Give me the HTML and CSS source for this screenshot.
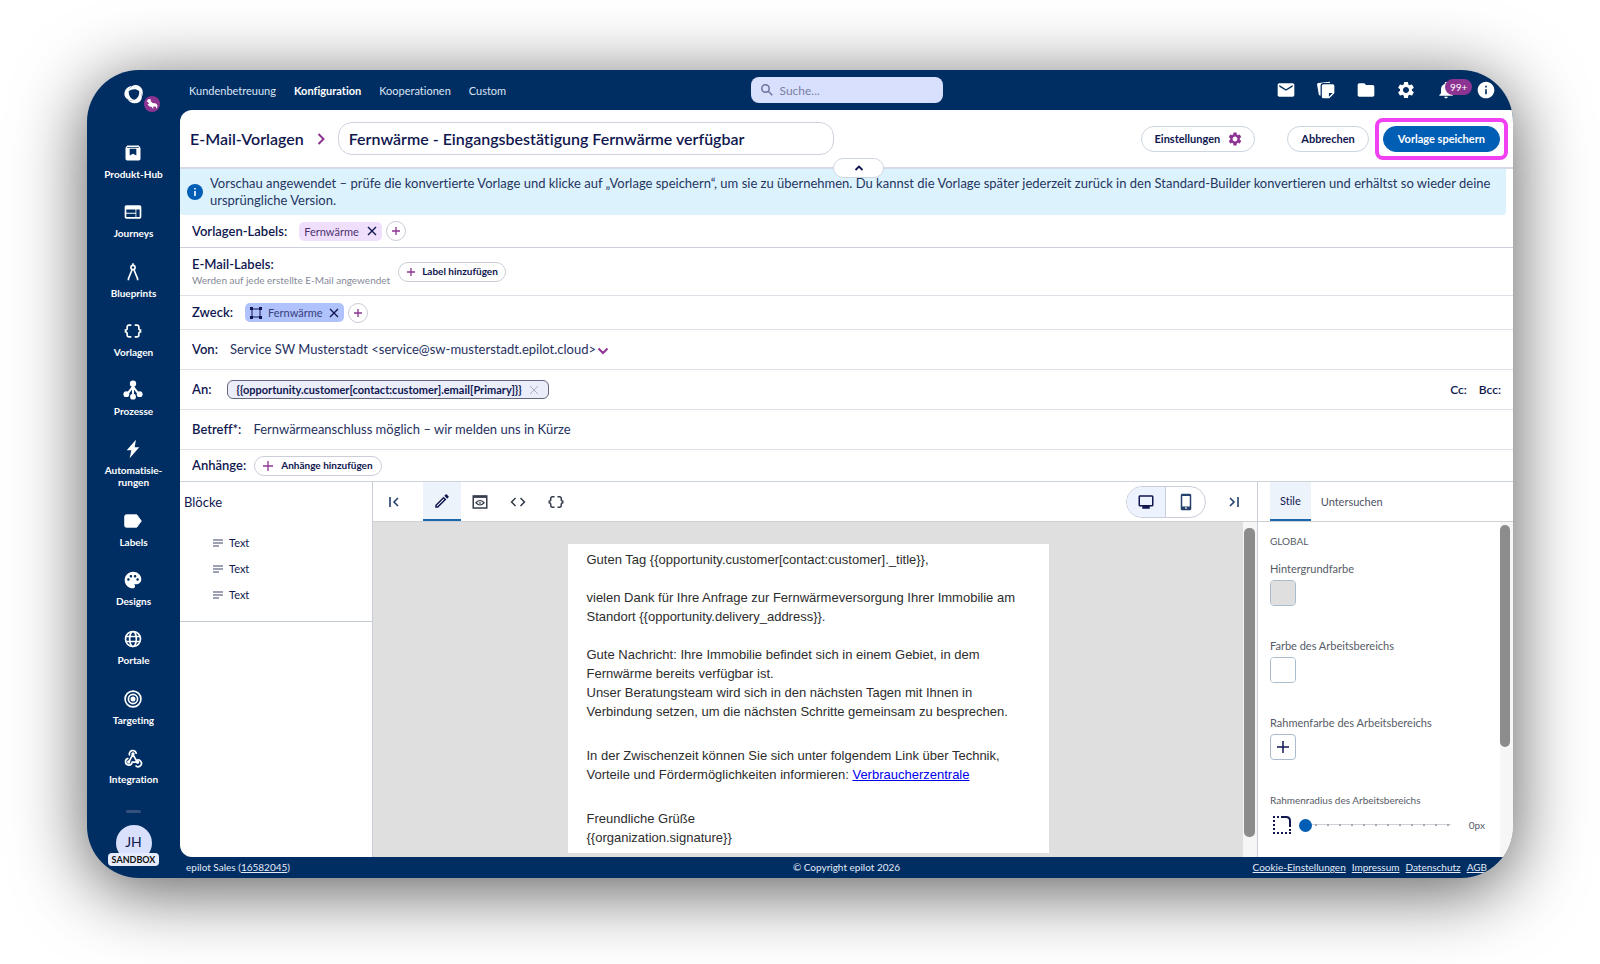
FILE: index.html
```
<!DOCTYPE html>
<html lang="de">
<head>
<meta charset="utf-8">
<meta name="viewport" content="width=device-width, initial-scale=1">
<title>E-Mail-Vorlagen</title>
<link rel="stylesheet" href="styles.css">
</head>
<body>

<div class="window">

	<aside class="sidebar">
		<a class="logo" href="#" aria-label="Startseite">
			<svg width="24" height="24" viewBox="0 0 22 22" fill="#fff">
				<path d="M6 8.500C7 2.500 15 0 18.300 6.500C19.300 8.800 19.200 11 18.500 13C17 7 11 4.500 6 8.500Z"/>
				<path d="M6 8.500C7 2.500 15 0 18.300 6.500C19.300 8.800 19.200 11 18.500 13C17 7 11 4.500 6 8.500Z" transform="rotate(120 11 11)"/>
				<path d="M6 8.500C7 2.500 15 0 18.300 6.500C19.300 8.800 19.200 11 18.500 13C17 7 11 4.500 6 8.500Z" transform="rotate(240 11 11)"/>
			</svg>
			<svg class="logo-badge" width="18" height="18" viewBox="0 0 18 18">
				<circle cx="9" cy="9" r="8" fill="#8d3493"/>
				<path d="M3.500 6.500L5.500 4l2.500.5-.5 1.500 2 2 3.500.5 1.500 2-.5 3-1-.5v-1.500l-3 .3.500 1.700H9.500L9 12l-2.500-.5L4.500 9.500l1.500-1-1-1.500z" fill="#fff"/>
			</svg>
		</a>
		<nav class="side-nav">
			<a href="#">
				<svg width="20" height="20" viewBox="0 0 24 24"><path fill="currentColor" d="M5 3h14l2 3v13a2 2 0 0 1-2 2H5a2 2 0 0 1-2-2V6zm3 4v8l4-2 4 2V7zM5 5v1h14V5z" fill-rule="evenodd"/></svg>
				Produkt-Hub
			</a>
			<a href="#">
				<svg width="20" height="20" viewBox="0 0 24 24"><path fill="currentColor" fill-rule="evenodd" d="M4 4h16a2 2 0 0 1 2 2v12a2 2 0 0 1-2 2H4a2 2 0 0 1-2-2V6c0-1.100.9-2 2-2zm0 5v4h11V9zm0 5v4h11v-4zm12-5v9h4V9z"/></svg>
				Journeys
			</a>
			<a href="#">
				<svg width="20" height="20" viewBox="0 0 24 24" fill="none" stroke="currentColor" stroke-width="2"><circle cx="12" cy="6.500" r="2.500"/><path d="M12 1.500V4M11 9L6.500 20v2M13 9l4.500 11v2"/></svg>
				Blueprints
			</a>
			<a href="#">
				<svg width="20" height="20" viewBox="0 0 24 24"><path fill="currentColor" d="M4 7v2c0 .55-.45 1-1 1H2v4h1c.55 0 1 .45 1 1v2c0 1.650 1.350 3 3 3h3v-2H7c-.55 0-1-.45-1-1v-2c0-1.300-.84-2.420-2-2.830v-.34C5.160 11.420 6 10.300 6 9V7c0-.55.45-1 1-1h3V4H7C5.350 4 4 5.350 4 7zm17 3c-.55 0-1-.45-1-1V7c0-1.650-1.350-3-3-3h-3v2h3c.55 0 1 .45 1 1v2c0 1.300.84 2.420 2 2.830v.34c-1.160.41-2 1.520-2 2.830v2c0 .55-.45 1-1 1h-3v2h3c1.650 0 3-1.350 3-3v-2c0-.55.45-1 1-1h1v-4h-1z"/></svg>
				Vorlagen
			</a>
			<a href="#">
				<svg width="20" height="20" viewBox="0 0 24 24" fill="currentColor"><path d="M12 4v16M12 8l-7 9M12 8l7 9" stroke="currentColor" stroke-width="2.500"/><circle cx="12" cy="4.500" r="3.800"/><circle cx="4" cy="17" r="3.500"/><circle cx="20" cy="17" r="3.500"/><circle cx="12" cy="20" r="3.500"/></svg>
				Prozesse
			</a>
			<a href="#">
				<svg width="20" height="20" viewBox="0 0 24 24"><path fill="currentColor" d="M15.500 1L4.500 13.500h5.500L8 23l11.500-13H14z"/></svg>
				Automatisie-<br>rungen
			</a>
			<a href="#">
				<svg width="20" height="20" viewBox="0 0 24 24"><path fill="currentColor" d="M16.500 4.500H4a2 2 0 0 0-2 2v11a2 2 0 0 0 2 2h12.500l5.500-7.500z" stroke="currentColor" stroke-linejoin="round"/></svg>
				Labels
			</a>
			<a href="#">
				<svg width="20" height="20" viewBox="0 0 24 24"><path fill="currentColor" d="M12 2C6.490 2 2 6.490 2 12s4.490 10 10 10c1.380 0 2.500-1.120 2.500-2.500 0-.61-.23-1.200-.64-1.670-.08-.1-.13-.21-.13-.33 0-.28.22-.5.5-.5H16c3.310 0 6-2.690 6-6 0-4.960-4.490-9-10-9zm-5.500 11c-.83 0-1.500-.67-1.500-1.500S5.670 10 6.500 10s1.500.67 1.500 1.500S7.330 13 6.500 13zm3-4C8.670 9 8 8.330 8 7.500S8.670 6 9.500 6s1.500.67 1.500 1.500S10.330 9 9.500 9zm5 0c-.83 0-1.500-.67-1.500-1.500S13.670 6 14.500 6s1.500.67 1.500 1.500S15.330 9 14.500 9zm3 4c-.83 0-1.500-.67-1.500-1.500s.67-1.500 1.500-1.500 1.500.67 1.500 1.500-.67 1.500-1.500 1.500z"/></svg>
				Designs
			</a>
			<a href="#">
				<svg width="20" height="20" viewBox="0 0 24 24" fill="none" stroke="currentColor" stroke-width="2"><circle cx="12" cy="12" r="9"/><ellipse cx="12" cy="12" rx="4" ry="9"/><path d="M4 9h16M4 15h16"/></svg>
				Portale
			</a>
			<a href="#">
				<svg width="20" height="20" viewBox="0 0 24 24" fill="none" stroke="currentColor" stroke-width="2"><circle cx="12" cy="12" r="9.500"/><circle cx="12" cy="12" r="5.500"/><circle cx="12" cy="12" r="2" fill="currentColor"/></svg>
				Targeting
			</a>
			<a href="#">
				<svg width="20" height="20" viewBox="0 0 24 24" fill="none" stroke="currentColor" stroke-width="2"><path d="M8 9a4.200 4.200 0 1 1 8-2M12 7l-4.500 9M11.500 7l4.500 8a4 4 0 1 1-1 6M6.500 12.500a4 4 0 1 0 4.500 4.500h6"/><circle cx="12" cy="7" r="1" fill="currentColor"/><circle cx="6.800" cy="16.800" r="1" fill="currentColor"/><circle cx="17.500" cy="17" r="1" fill="currentColor"/></svg>
				Integration
			</a>
		</nav>
		<span class="side-divider"></span>
		<button type="button" class="account">
			<span class="avatar">JH</span>
			<span class="sandbox">SANDBOX</span>
		</button>
	</aside>

	<div class="main">

		<header class="topbar">
			<nav class="top-nav">
				<a href="#">Kundenbetreuung</a>
				<a href="#" class="active">Konfiguration</a>
				<a href="#">Kooperationen</a>
				<a href="#">Custom</a>
			</nav>
			<label class="search">
				<svg width="14" height="14" viewBox="0 0 14 14" fill="none" stroke="#6d739e" stroke-width="1.500"><circle cx="5.500" cy="5.500" r="3.700"/><path d="M8.300 8.300l4 4"/></svg>
				<input type="text" placeholder="Suche..." aria-label="Suche">
			</label>
			<div class="top-icons">
				<button type="button" aria-label="Nachrichten"><svg width="20" height="20" viewBox="0 0 24 24"><path fill="currentColor" d="M20 4H4c-1.100 0-2 .9-2 2v12c0 1.100.9 2 2 2h16c1.100 0 2-.9 2-2V6c0-1.100-.9-2-2-2zm0 4l-8 5-8-5V6l8 5 8-5v2z"/></svg></button>
				<button type="button" aria-label="Notizen"><svg width="20" height="20" viewBox="0 0 24 24"><path fill="currentColor" d="M17 3.500L16.500 2 3 3.500a2 2 0 0 0-1.700 2.300L3.500 18l2 1V7a3.500 3.500 0 0 1 3.500-3.500zM9 5h11a2 2 0 0 1 2 2v9l-6 6H9a2 2 0 0 1-2-2V7c0-1.100.9-2 2-2zm6.500 15l4.500-4.500h-4.500z"/></svg></button>
				<button type="button" aria-label="Dateien"><svg width="20" height="20" viewBox="0 0 24 24"><path fill="currentColor" d="M10 4H4c-1.100 0-2 .9-2 2v12c0 1.100.9 2 2 2h16c1.100 0 2-.9 2-2V8c0-1.100-.9-2-2-2h-8l-2-2z"/></svg></button>
				<button type="button" aria-label="Einstellungen"><svg width="20" height="20" viewBox="0 0 24 24"><path fill="currentColor" d="M19.140 12.940c.04-.3.06-.61.06-.94 0-.32-.02-.64-.07-.94l2.030-1.580c.18-.14.23-.41.12-.61l-1.920-3.320c-.12-.22-.37-.29-.59-.22l-2.390.96c-.5-.38-1.030-.7-1.620-.94l-.36-2.540c-.04-.24-.24-.41-.48-.41h-3.840c-.24 0-.43.17-.47.41l-.36 2.540c-.59.24-1.130.57-1.620.94l-2.390-.96c-.22-.08-.47 0-.59.22L2.740 8.870c-.12.21-.08.47.12.61l2.030 1.580c-.05.3-.09.63-.09.94s.02.64.07.94l-2.030 1.580c-.18.14-.23.41-.12.61l1.920 3.320c.12.22.37.29.59.22l2.390-.96c.5.38 1.030.7 1.620.94l.36 2.540c.05.24.24.41.48.41h3.840c.24 0 .44-.17.47-.41l.36-2.540c.59-.24 1.130-.56 1.620-.94l2.390.96c.22.08.47 0 .59-.22l1.920-3.320c.12-.22.07-.47-.12-.61l-2.010-1.580zM12 15.600c-1.980 0-3.600-1.620-3.600-3.600s1.620-3.600 3.600-3.600 3.600 1.620 3.600 3.600-1.620 3.600-3.600 3.600z"/></svg></button>
				<button type="button" aria-label="Benachrichtigungen"><svg width="20" height="20" viewBox="0 0 24 24"><path fill="currentColor" d="M12 22c1.100 0 2-.9 2-2h-4c0 1.100.89 2 2 2zm6-6v-5c0-3.070-1.640-5.640-4.500-6.320V4c0-.83-.67-1.500-1.500-1.500s-1.500.67-1.500 1.500v.68C7.630 5.360 6 7.920 6 11v5l-2 2v1h16v-1l-2-2z"/></svg><span class="count">99+</span></button>
				<button type="button" aria-label="Hilfe"><svg width="20" height="20" viewBox="0 0 24 24"><path fill="currentColor" d="M12 2C6.480 2 2 6.480 2 12s4.480 10 10 10 10-4.480 10-10S17.520 2 12 2zm1 15h-2v-6h2v6zm0-8h-2V7h2v2z"/></svg></button>
			</div>
		</header>

		<main class="content">

			<div class="page-head">
				<h1><a href="#">E-Mail-Vorlagen</a></h1>
				<svg width="12" height="12" viewBox="0 0 12 12" fill="none" stroke="#8d3493" stroke-width="2"><path d="M3.500 1l5 5-5 5"/></svg>
				<input class="title-input" type="text" aria-label="Name der Vorlage" value="Fernwärme - Eingangsbestätigung Fernwärme verfügbar">
				<button type="button" class="btn btn-settings">Einstellungen
					<svg width="16" height="16" viewBox="0 0 24 24"><path fill="#8d3493" d="M19.140 12.940c.04-.3.06-.61.06-.94 0-.32-.02-.64-.07-.94l2.030-1.580c.18-.14.23-.41.12-.61l-1.920-3.320c-.12-.22-.37-.29-.59-.22l-2.390.96c-.5-.38-1.030-.7-1.620-.94l-.36-2.540c-.04-.24-.24-.41-.48-.41h-3.840c-.24 0-.43.17-.47.41l-.36 2.540c-.59.24-1.130.57-1.620.94l-2.390-.96c-.22-.08-.47 0-.59.22L2.740 8.870c-.12.21-.08.47.12.61l2.030 1.580c-.05.3-.09.63-.09.94s.02.64.07.94l-2.030 1.580c-.18.14-.23.41-.12.61l1.920 3.320c.12.22.37.29.59.22l2.390-.96c.5.38 1.030.7 1.620.94l.36 2.540c.05.24.24.41.48.41h3.840c.24 0 .44-.17.47-.41l.36-2.540c.59-.24 1.130-.56 1.620-.94l2.390.96c.22.08.47 0 .59-.22l1.920-3.320c.12-.22.07-.47-.12-.61l-2.010-1.580zM12 15.600c-1.980 0-3.600-1.620-3.600-3.600s1.620-3.600 3.600-3.600 3.600 1.620 3.600 3.600-1.620 3.600-3.600 3.600z"/></svg>
				</button>
				<button type="button" class="btn">Abbrechen</button>
				<div class="highlight"><button type="button" class="btn btn-primary">Vorlage speichern</button></div>
				<button type="button" class="collapse" aria-label="Einklappen"><svg width="10" height="10" viewBox="0 0 10 10" fill="none" stroke="#10174f" stroke-width="1.800"><path d="M1.500 7L5 3.500 8.500 7"/></svg></button>
			</div>

			<div class="notice">
				<svg width="16" height="16" viewBox="0 0 16 16"><circle cx="8" cy="8" r="8" fill="#005eb4"/><path d="M7.200 7h1.600v5H7.200zM7.200 4h1.600v1.600H7.200z" fill="#fff"/></svg>
				<p>Vorschau angewendet – prüfe die konvertierte Vorlage und klicke auf „Vorlage speichern“, um sie zu übernehmen. Du kannst die Vorlage später jederzeit zurück in den Standard-Builder konvertieren und erhältst so wieder deine ursprüngliche Version.</p>
			</div>

			<div class="row row-labels">
				<span class="name">Vorlagen-Labels:</span>
				<span class="chip chip-pink">Fernwärme
					<button type="button" class="plain" aria-label="Entfernen"><svg width="10" height="10" viewBox="0 0 10 10" stroke="#10174f" stroke-width="1.400"><path d="M1 1l8 8M9 1L1 9"/></svg></button>
				</span>
				<button type="button" class="round" aria-label="Label hinzufügen"><svg width="10" height="10" viewBox="0 0 10 10" stroke="#8d3493" stroke-width="1.300"><path d="M5 1v8M1 5h8"/></svg></button>
			</div>

			<div class="row row-mail">
				<div class="name">E-Mail-Labels:<small>Werden auf jede erstellte E-Mail angewendet</small></div>
				<button type="button" class="btn-small"><svg width="10" height="10" viewBox="0 0 10 10" stroke="#8d3493" stroke-width="1.300"><path d="M5 1v8M1 5h8"/></svg>Label hinzufügen</button>
			</div>

			<div class="row row-purpose">
				<span class="name">Zweck:</span>
				<span class="chip chip-blue">
					<svg width="12" height="12" viewBox="0 0 12 12" fill="#10174f"><path d="M2 2h8v8H2z" fill="none" stroke="#10174f"/><path d="M0 0h3v3H0zM9 0h3v3H9zM0 9h3v3H0zM9 9h3v3H9z"/></svg>
					Fernwärme
					<button type="button" class="plain" aria-label="Entfernen"><svg width="10" height="10" viewBox="0 0 10 10" stroke="#10174f" stroke-width="1.400"><path d="M1 1l8 8M9 1L1 9"/></svg></button>
				</span>
				<button type="button" class="round" aria-label="Zweck hinzufügen"><svg width="10" height="10" viewBox="0 0 10 10" stroke="#8d3493" stroke-width="1.300"><path d="M5 1v8M1 5h8"/></svg></button>
			</div>

			<div class="row row-from">
				<label class="name" for="from">Von:</label>
				<select id="from"><option>Service SW Musterstadt &lt;service@sw-musterstadt.epilot.cloud&gt;</option></select>
				<svg width="12" height="12" viewBox="0 0 12 12" fill="none" stroke="#8d3493" stroke-width="2"><path d="M1.500 4.500L6 9l4.500-4.500"/></svg>
			</div>

			<div class="row row-to">
				<span class="name">An:</span>
				<span class="variable">{{opportunity.customer[contact:customer].email[Primary]}}
					<button type="button" class="plain" aria-label="Entfernen"><svg width="10" height="10" viewBox="0 0 10 10" stroke="#a9adc4"><path d="M1 1l8 8M9 1L1 9"/></svg></button>
				</span>
				<span class="copies">
					<button type="button" class="plain">Cc:</button>
					<button type="button" class="plain">Bcc:</button>
				</span>
			</div>

			<div class="row row-subject">
				<label class="name" for="subject">Betreff*:</label>
				<input id="subject" type="text" value="Fernwärmeanschluss möglich – wir melden uns in Kürze">
			</div>

			<div class="row row-files">
				<span class="name">Anhänge:</span>
				<button type="button" class="btn-small"><svg width="10" height="10" viewBox="0 0 10 10" stroke="#8d3493" stroke-width="1.300"><path d="M5 0v10M0 5h10"/></svg>Anhänge hinzufügen</button>
			</div>

			<div class="editor">

				<section class="blocks">
					<div class="block-tree">
						<h2>Blöcke</h2>
						<ul>
							<li><svg width="10" height="8" viewBox="0 0 10 8" stroke="#3d4568" stroke-width="1.200"><path d="M0 1h10M0 4h10M0 7h6"/></svg>Text</li>
							<li><svg width="10" height="8" viewBox="0 0 10 8" stroke="#3d4568" stroke-width="1.200"><path d="M0 1h10M0 4h10M0 7h6"/></svg>Text</li>
							<li><svg width="10" height="8" viewBox="0 0 10 8" stroke="#3d4568" stroke-width="1.200"><path d="M0 1h10M0 4h10M0 7h6"/></svg>Text</li>
						</ul>
					</div>
				</section>

				<section class="stage">
					<div class="toolbar">
						<button type="button" class="tool tool-first" aria-label="Linke Leiste einklappen"><svg width="12" height="12" viewBox="0 0 12 12" fill="none" stroke="#24406b" stroke-width="1.600"><path d="M2 1v10M10 2L6 6l4 4"/></svg></button>
						<button type="button" class="tool active" aria-label="Bearbeiten"><svg width="18" height="18" viewBox="0 0 24 24"><path fill="#10174f" d="M14.060 9.020l.92.92L5.920 19H5v-.92l9.060-9.060M17.660 3c-.25 0-.51.1-.7.29l-1.830 1.830 3.750 3.750 1.830-1.830c.39-.39.39-1.020 0-1.410l-2.340-2.340c-.2-.2-.45-.29-.71-.29zm-3.600 3.190L3 17.250V21h3.750L17.810 9.940l-3.750-3.750z"/></svg></button>
						<button type="button" class="tool" aria-label="Vorschau"><svg width="18" height="18" viewBox="0 0 24 24" fill="none" stroke="#333c48" stroke-width="2"><path d="M3 4h18v16H3z"/><path d="M3 5h18" stroke-width="3"/><path d="M6.500 13q5.500-6 11 0-5.500 6-11 0z" stroke-width="1.500"/><circle cx="12" cy="13" r="1" stroke-width="1"/></svg></button>
						<button type="button" class="tool" aria-label="HTML"><svg width="18" height="18" viewBox="0 0 24 24"><path fill="#333c48" d="M9.400 16.600L4.800 12l4.600-4.600L8 6l-6 6 6 6 1.400-1.400zm5.200 0l4.600-4.600-4.600-4.600L16 6l6 6-6 6-1.400-1.400z"/></svg></button>
						<button type="button" class="tool" aria-label="Variablen"><svg width="18" height="18" viewBox="0 0 24 24"><path fill="#333c48" d="M4 7v2c0 .55-.45 1-1 1H2v4h1c.55 0 1 .45 1 1v2c0 1.650 1.350 3 3 3h3v-2H7c-.55 0-1-.45-1-1v-2c0-1.300-.84-2.420-2-2.830v-.34C5.160 11.420 6 10.300 6 9V7c0-.55.45-1 1-1h3V4H7C5.350 4 4 5.350 4 7zm17 3c-.55 0-1-.45-1-1V7c0-1.650-1.350-3-3-3h-3v2h3c.55 0 1 .45 1 1v2c0 1.300.84 2.420 2 2.830v.34c-1.160.41-2 1.520-2 2.830v2c0 .55-.45 1-1 1h-3v2h3c1.650 0 3-1.350 3-3v-2c0-.55.45-1 1-1h1v-4h-1z"/></svg></button>
						<div class="devices">
							<button type="button" class="on" aria-label="Desktop"><svg width="18" height="18" viewBox="0 0 24 24"><path fill="#10174f" fill-rule="evenodd" d="M4 3h16a2 2 0 0 1 2 2v11a2 2 0 0 1-2 2h-3v3H7v-3H4a2 2 0 0 1-2-2V5c0-1.100.9-2 2-2zm0 2v11h16V5z"/></svg></button>
							<button type="button" aria-label="Mobil"><svg width="18" height="18" viewBox="0 0 24 24"><path fill="#24406b" fill-rule="evenodd" d="M7 1h10a2 2 0 0 1 2 2v18a2 2 0 0 1-2 2H7a2 2 0 0 1-2-2V3c0-1.100.9-2 2-2zm0 3v14h10V4zm4 15v2h2v-2z"/></svg></button>
						</div>
						<button type="button" class="tool tool-last" aria-label="Rechte Leiste einklappen"><svg width="12" height="12" viewBox="0 0 12 12" fill="none" stroke="#24406b" stroke-width="1.600"><path d="M10 1v10M2 2l4 4-4 4"/></svg></button>
					</div>
					<div class="canvas">
						<article class="mail">
							<div class="mail-block">
								<p>Guten Tag {{opportunity.customer[contact:customer]._title}},</p>
								<p>vielen Dank für Ihre Anfrage zur Fernwärmeversorgung Ihrer Immobilie am Standort {{opportunity.delivery_address}}.</p>
								<p>Gute Nachricht: Ihre Immobilie befindet sich in einem Gebiet, in dem Fernwärme bereits verfügbar ist.<br>Unser Beratungsteam wird sich in den nächsten Tagen mit Ihnen in Verbindung setzen, um die nächsten Schritte gemeinsam zu besprechen.</p>
							</div>
							<div class="mail-block">
								<p>In der Zwischenzeit können Sie sich unter folgendem Link über Technik, Vorteile und Fördermöglichkeiten informieren: <a href="#">Verbraucherzentrale</a></p>
							</div>
							<div class="mail-block">
								<p>Freundliche Grüße<br>{{organization.signature}}</p>
							</div>
						</article>
						<div class="scroll scroll-canvas"><span></span></div>
					</div>
				</section>

				<section class="panel">
					<div class="tabs">
						<button type="button" class="active">Stile</button>
						<button type="button">Untersuchen</button>
					</div>
					<div class="panel-body">
						<div class="styles">
							<h3>GLOBAL</h3>
							<div class="field">
								<label for="bg-color">Hintergrundfarbe</label>
								<input class="swatch" id="bg-color" type="color" value="#dfdfdf">
							</div>
							<div class="field">
								<label for="area-color">Farbe des Arbeitsbereichs</label>
								<input class="swatch" id="area-color" type="color" value="#ffffff">
							</div>
							<div class="field">
								<label for="border-color">Rahmenfarbe des Arbeitsbereichs</label>
								<button class="swatch" id="border-color" type="button" aria-label="Farbe hinzufügen"><svg width="12" height="12" viewBox="0 0 12 12" stroke="#10174f" stroke-width="1.500"><path d="M6 0v12M0 6h12"/></svg></button>
							</div>
							<div class="field">
								<label class="small" for="radius">Rahmenradius des Arbeitsbereichs</label>
								<div class="slider">
									<svg width="18" height="18" viewBox="0 0 18 18" fill="none" stroke="#10174f" stroke-width="2"><path d="M0 1h8M1 4v13M0 17h18M17 9v9" stroke-dasharray="2 2"/><path d="M8 1h5q4 0 4 4v5"/></svg>
									<input type="range" id="radius" min="0" max="60" value="0">
									<output for="radius">0px</output>
								</div>
							</div>
						</div>
						<div class="scroll scroll-panel"><span></span></div>
					</div>
				</section>

			</div>
		</main>

		<footer class="footer">
			<span>epilot Sales (<a href="#">16582045</a>)</span>
			<span>© Copyright epilot 2026</span>
			<nav>
				<a href="#">Cookie-Einstellungen</a>
				<a href="#">Impressum</a>
				<a href="#">Datenschutz</a>
				<a href="#">AGB</a>
			</nav>
		</footer>

	</div>
</div>

</body>
</html>
```
FILE: styles.css
```
* {
	box-sizing: border-box;
}
body {
	margin: 0;
	padding: 70px 87px 86px;
	background: #fff;
	color: #10174f;
	font-family: Lato, "Liberation Sans", sans-serif;
	font-size: 13px;
	line-height: 17px;
	font-variant-ligatures: none;
}
h1, h2, h3, p, ul {
	margin: 0;
	padding: 0;
}
svg {
	display: block;
	flex: none;
}
button, input, select {
	font: inherit;
	color: inherit;
	margin: 0;
	padding: 0;
	border: 0;
	background: none;
	font-variant-ligatures: none;
}
button {
	display: flex;
	align-items: center;
	justify-content: center;
	white-space: nowrap;
}
a {
	color: inherit;
}

.window {
	display: flex;
	min-height: calc(100vh - 156px);
	border-radius: 52px;
	overflow: hidden;
	background: #002e63;
	box-shadow: 0 12px 72px rgba(0, 0, 0, .65);
}

/* sidebar */
.sidebar {
	flex: 0 0 93px;
	display: flex;
	flex-direction: column;
	align-items: center;
	padding: 12px 0;
	color: #fff;
}
.logo {
	position: relative;
	margin-bottom: 37px;
}
.logo-badge {
	position: absolute;
	left: 21px;
	top: 13px;
}
.side-nav {
	flex: 1;
	display: flex;
	flex-direction: column;
	justify-content: space-between;
}
.side-nav a {
	display: flex;
	flex-direction: column;
	align-items: center;
	font-size: 10px;
	font-weight: 700;
	line-height: 12px;
	text-align: center;
	text-decoration: none;
}
.side-nav svg {
	margin-bottom: 5px;
}
.side-divider {
	width: 15px;
	height: 3px;
	margin: 25px 0 12px;
	border-radius: 2px;
	background: #34507f;
}
.account {
	flex-direction: column;
	color: #10174f;
}
.avatar {
	width: 36px;
	height: 36px;
	border-radius: 50%;
	background: #d9e0fc;
	font-size: 14px;
	line-height: 34px;
}
.sandbox {
	margin-top: -8px;
	padding: 0 4px;
	border-radius: 4px;
	background: #e6ecfd;
	font-size: 9px;
	font-weight: 700;
	line-height: 13px;
	color: #111;
}

.main {
	flex: 1;
	min-width: 0;
	display: flex;
	flex-direction: column;
}

/* top bar */
.topbar {
	display: grid;
	grid-template-columns: 1fr auto 1fr;
	align-items: center;
	height: 40px;
	padding: 0 9px;
	color: #fff;
}
.top-nav {
	display: flex;
	gap: 18px;
	font-size: 11px;
}
.top-nav a {
	color: #dbe5f5;
	text-decoration: none;
}
.top-nav .active {
	color: #fff;
	font-weight: 700;
}
.search {
	display: flex;
	align-items: center;
	gap: 6px;
	width: 192px;
	height: 26px;
	padding: 0 9px;
	border-radius: 8px;
	background: #d9e0fd;
	font-size: 12px;
}
.search input {
	width: 100%;
	outline: 0;
}
.search input::placeholder {
	color: #7a80a5;
	opacity: 1;
}
.top-icons {
	display: flex;
	justify-content: flex-end;
	gap: 20px;
	margin-right: 8px;
}
.top-icons button {
	position: relative;
}
.count {
	position: absolute;
	left: 9px;
	top: -1px;
	padding: 0 5px;
	border-radius: 8px;
	background: #8d3493;
	font-size: 10px;
	line-height: 16px;
}

/* page head */
.content {
	flex: 1;
	display: flex;
	flex-direction: column;
	border-radius: 12px 0 0 12px;
	overflow: hidden;
	background: #fff;
}
.page-head {
	position: relative;
	display: flex;
	align-items: center;
	height: 59px;
	padding: 0 5px 0 10px;
	border-bottom: 2px solid #d5dae4;
}
.page-head h1 {
	margin-right: 11px;
	font-size: 16px;
	font-weight: 600;
}
.page-head h1 a {
	text-decoration: none;
}
.title-input {
	flex: 0 1 496px;
	height: 33px;
	margin: 0 auto 0 11px;
	padding: 0 10px;
	border: 1px solid #cfd2de;
	border-radius: 14px;
	font-size: 16px;
	font-weight: 600;
}
.btn {
	height: 26px;
	padding: 0 13px;
	border: 1px solid #ccd5e0;
	border-radius: 13px;
	font-size: 11px;
	font-weight: 700;
	gap: 7px;
}
.btn-settings {
	margin-right: 32px;
	padding-right: 11px;
}
.btn-primary {
	padding: 0 14px;
	border-color: #005eb4;
	background: #005eb4;
	color: #fff;
}
.highlight {
	margin-left: 6px;
	padding: 4px;
	border: 4px solid #f140f1;
	border-radius: 8px;
}
.collapse {
	position: absolute;
	left: 49%;
	top: 48px;
	width: 51px;
	height: 20px;
	border: 1px solid #cfd5e0;
	border-radius: 10px;
	background: #fff;
}
.notice {
	display: flex;
	align-items: center;
	gap: 7px;
	margin-right: 7px;
	padding: 6px 7px;
	border-radius: 0 0 3px 3px;
	background: #dcf3fe;
	color: #26355f;
}

/* mail settings */
.row {
	display: flex;
	align-items: center;
	padding: 0 12px;
	border-bottom: 1px solid #dfe1e8;
}
.row-labels {
	height: 33px;
	border-color: #ccd0da;
}
.row-mail {
	height: 48px;
}
.row-purpose {
	height: 34px;
}
.row-from, .row-to, .row-subject {
	height: 40px;
}
.row-files {
	height: 32px;
	border-color: #ccd3da;
}
.name {
	font-weight: 600;
}
.name small {
	display: block;
	font-size: 10px;
	font-weight: 400;
	line-height: 15px;
	color: #878a97;
}
.chip {
	display: flex;
	align-items: center;
	gap: 8px;
	height: 19px;
	margin: 0 4px 0 12px;
	padding: 0 5px;
	border-radius: 5px;
	font-size: 11px;
}
.chip-pink {
	background: #efdffd;
	color: #4d2f6e;
}
.chip-blue {
	gap: 6px;
	background: #b0c2fb;
	color: #34407c;
}
.round {
	width: 20px;
	height: 20px;
	border: 1px solid #c9ccd6;
	border-radius: 50%;
}
.btn-small {
	gap: 8px;
	height: 20px;
	margin-left: 8px;
	padding: 0 8px;
	border: 1px solid #cbced8;
	border-radius: 10px;
	font-size: 10px;
	font-weight: 700;
}
.row-mail .btn-small {
	gap: 6px;
	padding: 0 7px;
}
.row-from select {
	appearance: none;
	margin-left: 12px;
	color: #26305f;
}
.variable {
	display: flex;
	align-items: center;
	gap: 7px;
	height: 19px;
	margin-left: 15px;
	padding: 0 9px;
	border: 1px solid #63677d;
	border-radius: 6px;
	background: #ebedfb;
	font-size: 11px;
	font-weight: 700;
}
.copies {
	display: flex;
	gap: 12px;
	margin-left: auto;
	font-size: 12px;
	font-weight: 600;
}
.row-subject input {
	flex: 1;
	margin-left: 12px;
	color: #26305f;
}

/* editor */
.editor {
	flex: 1;
	display: grid;
	grid-template-columns: 193px 1fr 256px;
}
.blocks {
	border-right: 1px solid #c9ced6;
}
.block-tree {
	height: 140px;
	padding: 12px 4px;
	border-bottom: 1px solid #c3ccd3;
}
.block-tree h2 {
	font-size: 13px;
	font-weight: 400;
}
.block-tree ul {
	padding: 19px 0 0 29px;
	list-style: none;
	font-size: 11px;
	line-height: 26px;
}
.block-tree li {
	display: flex;
	align-items: center;
	gap: 6px;
}
.stage, .panel {
	display: flex;
	flex-direction: column;
	min-width: 0;
}
.toolbar {
	display: flex;
	height: 40px;
	padding: 0 9px 0 7px;
	border-bottom: 1px solid #cdd1d6;
}
.tool {
	width: 38px;
	height: 39px;
}
.tool-first {
	width: 28px;
	margin-right: 15px;
}
.tool-last {
	width: 28px;
}
.tool.active, .tabs .active {
	background: #edf3fb;
	border-bottom: 2px solid #1a67ab;
}
.devices {
	display: flex;
	height: 32px;
	margin: 4px 14px 0 auto;
	border: 1px solid #c9ced9;
	border-radius: 16px;
	overflow: hidden;
}
.devices button {
	width: 39px;
}
.devices .on {
	background: #edf3fe;
	border-right: 1px solid #c9ced9;
}
.canvas {
	flex: 1;
	display: flex;
	background: #dfdfdf;
}
.mail {
	flex: 0 1 481px;
	align-self: flex-start;
	margin: 22px auto 4px;
	padding: 6px 16px 6px 19px;
	background: #fff;
	color: #2d2d2d;
	font-family: "Liberation Sans", Arial, sans-serif;
	font-size: 13px;
	line-height: 19px;
}
.mail p + p {
	margin-top: 19px;
}
.mail-block + .mail-block {
	margin-top: 25px;
}
.mail a {
	color: #00e;
}
.scroll {
	flex: none;
	background: #f6f6f6;
}
.scroll span {
	display: block;
	border-radius: 5px;
	background: #8c8c8c;
}
.scroll-canvas {
	width: 14px;
	padding: 6px 2px 20px 1px;
}
.scroll-canvas span {
	height: 100%;
}
.scroll-panel {
	width: 13px;
	padding: 3px 3px 0 0;
}
.scroll-panel span {
	height: 67%;
}

/* style panel */
.panel {
	border-left: 1px solid #c9ced6;
}
.tabs {
	display: flex;
	height: 40px;
	padding-left: 12px;
	border-bottom: 1px solid #cdd1d6;
	color: #4c5363;
	font-size: 11px;
}
.tabs button {
	padding: 0 10px;
}
.tabs .active {
	color: #10174f;
}
.panel-body {
	flex: 1;
	display: flex;
}
.styles {
	flex: 1;
	padding: 12px 13px 0 12px;
	color: #555b66;
}
.styles h3 {
	margin-bottom: 13px;
	font-size: 10px;
	font-weight: 400;
	line-height: 14px;
}
.field {
	height: 77px;
	font-size: 11px;
	line-height: 16px;
}
.field:last-child {
	height: auto;
}
.field label {
	display: block;
	margin-bottom: 3px;
}
.field .small {
	margin-bottom: 8px;
	font-size: 10px;
}
.swatch {
	width: 26px;
	height: 26px;
	border: 1px solid #a9bccd;
	border-radius: 4px;
	overflow: hidden;
}
.swatch::-webkit-color-swatch-wrapper {
	padding: 0;
}
.swatch::-webkit-color-swatch {
	border: 0;
}
.slider {
	display: flex;
	align-items: center;
	padding: 0 2px 0 3px;
}
.slider input {
	appearance: none;
	flex: 0 1 152px;
	min-width: 0;
	height: 14px;
	margin: 0 auto 0 8px;
	background:
		repeating-linear-gradient(90deg, transparent 0 10px, #a5a9b0 10px 12px) 6px 6px / 100% 2px no-repeat,
		linear-gradient(#cfd2d6, #cfd2d6) 6px 6px / 100% 1px no-repeat;
}
.slider input::-webkit-slider-thumb {
	appearance: none;
	width: 13px;
	height: 13px;
	border-radius: 50%;
	background: #005eb4;
}
.slider output {
	font-size: 10px;
}

/* footer */
.footer {
	display: grid;
	grid-template-columns: 1fr auto 1fr;
	align-items: center;
	height: 21px;
	padding: 0 6px;
	color: #e3ebf7;
	font-size: 10px;
}
.footer nav {
	display: flex;
	justify-content: flex-end;
	gap: 6px;
	margin-right: 20px;
}
```
